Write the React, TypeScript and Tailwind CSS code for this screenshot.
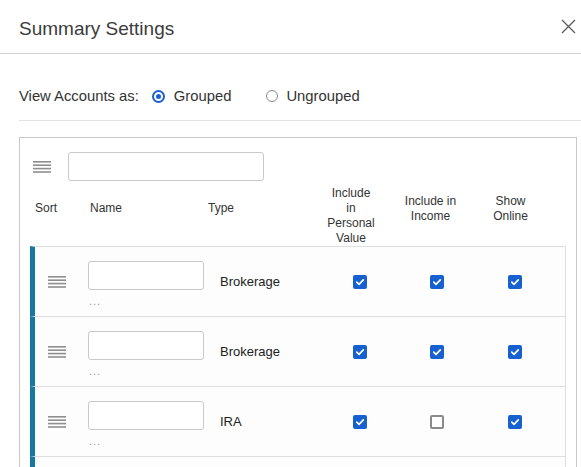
import React from "react";

type Account = {
  type: string;
  personal: boolean;
  income: boolean;
  online: boolean;
};

const accounts: Account[] = [
  { type: "Brokerage", personal: true, income: true, online: true },
  { type: "Brokerage", personal: true, income: true, online: true },
  { type: "IRA", personal: true, income: false, online: true },
];

function DragHandle() {
  return (
    <svg width="18" height="12" viewBox="0 0 18 12" className="shrink-0">
      <rect x="0" y="0" width="18" height="1.6" fill="#8e8e8e" />
      <rect x="0" y="3.4" width="18" height="1.6" fill="#8e8e8e" />
      <rect x="0" y="6.8" width="18" height="1.6" fill="#8e8e8e" />
      <rect x="0" y="10.2" width="18" height="1.6" fill="#8e8e8e" />
    </svg>
  );
}

function Checkbox({ checked }: { checked: boolean }) {
  if (!checked) {
    return (
      <span className="block w-[14px] h-[14px] rounded-[2px] border-2 border-[#8a8a8a] bg-white" />
    );
  }
  return (
    <span className="flex items-center justify-center w-[14px] h-[14px] rounded-[2px] bg-[#1660d0]">
      <svg width="10" height="10" viewBox="0 0 10 10">
        <path
          d="M1.8 5.2 L4 7.3 L8.3 2.8"
          fill="none"
          stroke="#fff"
          strokeWidth="1.7"
          strokeLinecap="round"
          strokeLinejoin="round"
        />
      </svg>
    </span>
  );
}

function AccountRow({ account }: { account: Account }) {
  return (
    <div className="flex h-[70px] border-t border-r border-[#dedede] border-l-[5px] border-l-[#15799f] bg-[#fdfdfd]">
      <div className="w-[53px] pl-[13px] flex items-center">
        <DragHandle />
      </div>
      <div className="w-[132px] pt-[14px]">
        <input
          type="text"
          className="block w-[116px] h-[29px] rounded-[3px] border border-[#c9c9c9] bg-white outline-none"
        />
        <div className="text-[11px] leading-[14px] mt-[4px] pl-[1px] text-[#9a9a9a] tracking-[1px]">
          ...
        </div>
      </div>
      <div className="w-[103px] flex items-center text-[13px] text-[#222]">
        {account.type}
      </div>
      <div className="w-[74px] flex items-center justify-center pt-[1px]">
        <Checkbox checked={account.personal} />
      </div>
      <div className="w-[80px] flex items-center justify-center pt-[1px]">
        <Checkbox checked={account.income} />
      </div>
      <div className="w-[76px] flex items-center justify-center pt-[1px]">
        <Checkbox checked={account.online} />
      </div>
    </div>
  );
}

export default function App() {
  return (
    <div className="w-[581px] h-[467px] overflow-hidden bg-white text-[#333] font-['Liberation_Sans',Arial,sans-serif]">
      {/* Header */}
      <header className="h-[54px] flex items-center justify-between pl-[19px] pr-[5px] border-b border-[#d2d2d2]">
        <h1 className="text-[19px] leading-[22px] pt-[4px] text-[#3c3c3c] font-normal">
          Summary Settings
        </h1>
        <svg width="15" height="15" viewBox="0 0 15 15">
          <path d="M1 1 L14 14 M14 1 L1 14" stroke="#5a5a5a" strokeWidth="1.3" fill="none" />
        </svg>
      </header>

      <div className="pl-[19px]">
        {/* View accounts as */}
        <div className="flex items-center h-[26px] mt-[29px] text-[14.8px]">
          <span>View Accounts as:</span>
          <label className="flex items-center ml-[13px]">
            <span className="flex items-center justify-center w-[13px] h-[13px] rounded-full border-2 border-[#1a5fd0]">
              <span className="w-[5px] h-[5px] rounded-full bg-[#1a5fd0]" />
            </span>
            <span className="ml-[9px]">Grouped</span>
          </label>
          <label className="flex items-center ml-[35px]">
            <span className="w-[12px] h-[12px] rounded-full border-[1.5px] border-[#8a8a8a]" />
            <span className="ml-[8px]">Ungrouped</span>
          </label>
        </div>
        <div className="mt-[11px] border-b border-[#e2e2e2]" />

        {/* Accounts table */}
        <div className="mt-[16px] mr-[4px] border border-[#c8c8c8] pt-[14px]">
          <div className="flex items-center pl-[13px]">
            <DragHandle />
            <input
              type="text"
              className="ml-[17px] w-[196px] h-[29px] rounded-[3px] border border-[#c9c9c9] bg-white outline-none"
            />
          </div>

          <div className="flex items-start h-[61px] mt-[4px] text-[12px] leading-[15px] text-[#333]">
            <div className="w-[70px] pl-[15px] pt-[16px]">Sort</div>
            <div className="w-[118px] pt-[16px]">Name</div>
            <div className="w-[105px] pt-[16px]">Type</div>
            <div className="w-[76px] text-center pt-[1px]">
              Include
              <br />
              in
              <br />
              Personal
              <br />
              Value
            </div>
            <div className="w-[83px] text-center pt-[9px]">
              Include in
              <br />
              Income
            </div>
            <div className="w-[77px] text-center pt-[9px]">
              Show
              <br />
              Online
            </div>
          </div>

          <div className="ml-[10px] mr-[10px]">
            {accounts.map((a, i) => (
              <AccountRow key={i} account={a} />
            ))}
            {/* next row, cut off by the window */}
            <div className="h-[70px] border-t border-r border-[#dedede] border-l-[5px] border-l-[#15799f] bg-[#fdfdfd]" />
          </div>
        </div>
      </div>
    </div>
  );
}
